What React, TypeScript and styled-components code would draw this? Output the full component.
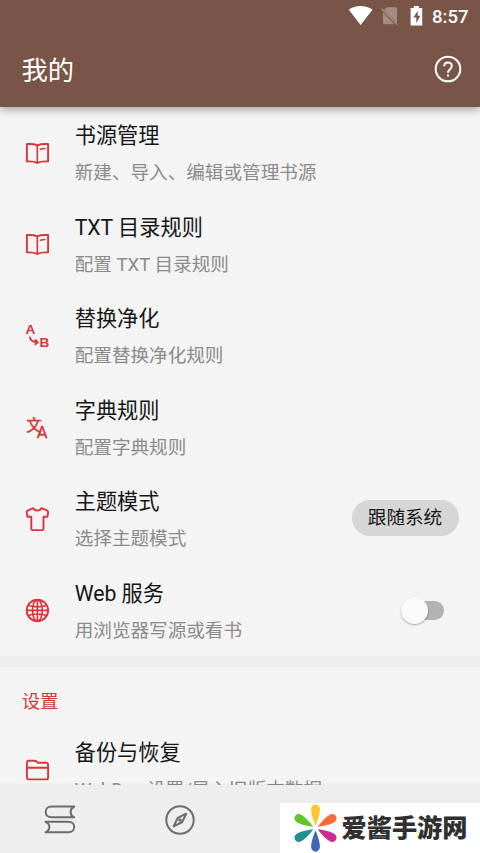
import React from 'react';
import styled, { createGlobalStyle } from 'styled-components';

const RED = '#d9363b';
const FONT = 'Roboto, "Noto Sans CJK SC", sans-serif';

const GlobalStyle = createGlobalStyle`
  body { margin: 0; background: #f4f4f4; }
  * { box-sizing: border-box; }
`;

const Screen = styled.div`
  position: relative;
  width: 480px;
  height: 853px;
  display: flex;
  flex-direction: column;
  overflow: hidden;
  background: #f4f4f4;
  font-family: ${FONT};
  color: #161616;
`;

const Header = styled.header`
  flex: none;
  height: 107px;
  z-index: 1;
  background: #795548;
  color: #fff;
  box-shadow: 0 3px 8px rgba(0, 0, 0, 0.32);
`;

const StatusBar = styled.div`
  height: 32px;
  display: flex;
  align-items: center;
  justify-content: flex-end;
  padding-right: 11px;
`;

const StatusIcons = styled.svg`
  width: 80px;
  height: 32px;
  margin-right: 7px;
`;

const Clock = styled.span`
  width: 37px;
  padding-top: 1px;
  font-size: 18.6px;
  font-weight: 500;
  line-height: 32px;
  white-space: nowrap;
`;

const TitleBar = styled.div`
  height: 75px;
  display: flex;
  align-items: center;
  justify-content: space-between;
  padding: 0 18px 0 21.5px;
`;

const PageTitle = styled.h1`
  margin: 2px 0 0;
  font-size: 26.3px;
  font-weight: 400;
  line-height: 40px;
`;

const HelpIcon = styled.svg`
  width: 28px;
  height: 28px;
  margin-bottom: 1px;
`;

const Content = styled.main`
  flex: 1;
  min-height: 0;
  overflow: hidden;
`;

const Row = styled.section`
  height: 91.5px;
  display: flex;
  align-items: center;
  padding: 0 21.5px 0 25px;
`;

const RowIcon = styled.svg`
  flex: none;
  width: 24px;
  height: 24px;
  margin-right: 25.7px;
  fill: none;
  stroke: ${RED};
  stroke-width: 1.9;
  stroke-linejoin: round;
  stroke-linecap: round;
`;

const Label = styled.div`
  flex: 1;
  padding-top: 2px;
  white-space: nowrap;
`;

const RowTitle = styled.div`
  font-size: 21.2px;
  line-height: 32px;
  margin-bottom: 7px;
`;

const Summary = styled.div`
  font-size: 18.6px;
  line-height: 28px;
  color: #8b8b8b;
`;

const ModeButton = styled.button`
  width: 107px;
  height: 36px;
  margin-bottom: 1px;
  padding: 1px 0 0;
  border: 0;
  border-radius: 18px;
  background: #d6d6d6;
  color: #161616;
  font: 400 18.6px/35px ${FONT};
`;

const Switch = styled.div`
  width: 38px;
  height: 19px;
  margin-right: 15px;
  border-radius: 10px;
  background: #b2b2b2;
`;

const Thumb = styled.div`
  width: 27px;
  height: 27px;
  margin: -4px 0 0 -5px;
  border-radius: 50%;
  background: #fafafa;
  box-shadow: 0 1px 2px rgba(0, 0, 0, 0.32);
`;

const Divider = styled.div`
  height: 10.5px;
  background: #eeeeee;
`;

const SectionTitle = styled.h2`
  margin: 0;
  height: 57.5px;
  padding: 21px 21.7px 0;
  font-size: 18.4px;
  font-weight: 400;
  line-height: 28px;
  color: ${RED};
`;

const BottomNav = styled.nav`
  flex: none;
  height: 68px;
  z-index: 1;
  display: grid;
  grid-template-columns: repeat(4, 120px);
  align-items: center;
  justify-items: center;
  background: #eeeeee;
  box-shadow: 0 -1px 2px rgba(0, 0, 0, 0.05);
`;

const NavIcon = styled.svg`
  width: 32px;
  height: 32px;
  margin-top: 1px;
  fill: none;
  stroke: #6b6b6b;
  stroke-width: 2;
  stroke-linejoin: round;
`;

const Watermark = styled.div`
  position: absolute;
  right: 0;
  bottom: 0;
  z-index: 2;
  width: 200px;
  height: 50px;
  display: flex;
  align-items: center;
  padding-left: 14px;
  background: #fff;
`;

const Flower = styled.svg`
  width: 43px;
  height: 48px;
  margin-right: 4.5px;
  margin-bottom: 1px;
`;

const Brand = styled.span`
  margin-bottom: 3px;
  font: 900 25.2px/47px "Noto Sans CJK SC", sans-serif;
  color: #303030;
  white-space: nowrap;
`;

const BookGlyph = () => (
  <>
    <path d="M12.3 4.3C9 2.6 5 2.9 1.9 3v17.4c3.3-.2 7-.3 10.4 1.5 3.2-1.8 7.2-1.7 10.8-1.5V3c-3.3-.1-7.5-.4-10.8 1.3Z" />
    <path d="M12.3 4.5v17.2M15.5 8.3c1.4-.5 2.8-.7 4.4-.8" strokeWidth="1.6" />
  </>
);

const ReplaceGlyph = () => (
  <>
    <g fill={RED} stroke="none" fontFamily="Liberation Sans, sans-serif" fontWeight="700" fontSize="13.6">
      <text x="0.5" y="9.9">A</text>
      <text x="14.6" y="23">B</text>
    </g>
    <path d="M5 13.4c.5 3.4 3 4.8 7.5 4.8m-2.2-2.2 2.5 2.2-2.5 2.1" strokeWidth="1.8" />
  </>
);

const DictionaryGlyph = () => (
  <g fill={RED} stroke={RED} strokeWidth="0.4">
    <text x="1.3" y="15.6" fontFamily="Noto Sans CJK SC, sans-serif" fontSize="15.5">文</text>
    <text x="11.8" y="22.8" fontFamily="Roboto, sans-serif" fontSize="16.5">A</text>
  </g>
);

const ShirtGlyph = () => (
  <path d="M8.3 1.2c1.2 3.1 6.9 3.1 8.1 0l5.4 2.1c1 .4 1.5 1.3 1.3 2.2l-.7 4.3h-3.9v12c0 .8-.5 1.3-1.3 1.3H7.6c-.8 0-1.3-.5-1.3-1.3v-12H2.5l-.8-4.3c-.2-1 .3-1.8 1.3-2.2Z" />
);

const GlobeGlyph = () => (
  <>
    <circle cx="12.4" cy="12.4" r="10.7" strokeWidth="1.9" />
    <ellipse cx="12.4" cy="12.4" rx="4.9" ry="10.7" strokeWidth="1.6" />
    <path d="M12.4 1.7v21.4M1.7 12.4h21.4M3.4 7.4c5 1.6 13 1.6 18 0M3.4 17.4c5-1.6 13-1.6 18 0" strokeWidth="1.6" />
  </>
);

const FolderGlyph = () => (
  <path d="M1.9 9.7V4.6c0-1.2.7-1.9 1.9-1.9h5.6c1 0 1.6.3 2.3 1l1.1 1.1h8.4c1.2 0 1.9.7 1.9 1.9v12.8c0 1.2-.7 1.9-1.9 1.9H3.8c-1.2 0-1.9-.7-1.9-1.9V9.7h21.2" />
);

type Item = { title: string; summary: string; glyph: React.ReactNode; control?: React.ReactNode };

const items: Item[] = [
  { title: '书源管理', summary: '新建、导入、编辑或管理书源', glyph: <BookGlyph /> },
  { title: 'TXT 目录规则', summary: '配置 TXT 目录规则', glyph: <BookGlyph /> },
  { title: '替换净化', summary: '配置替换净化规则', glyph: <ReplaceGlyph /> },
  { title: '字典规则', summary: '配置字典规则', glyph: <DictionaryGlyph /> },
  { title: '主题模式', summary: '选择主题模式', glyph: <ShirtGlyph />, control: <ModeButton>跟随系统</ModeButton> },
  { title: 'Web 服务', summary: '用浏览器写源或看书', glyph: <GlobeGlyph />, control: <Switch><Thumb /></Switch> },
];

const SettingRow = ({ title, summary, glyph, control }: Item) => (
  <Row>
    <RowIcon viewBox="0 0 24 24" overflow="visible">{glyph}</RowIcon>
    <Label>
      <RowTitle>{title}</RowTitle>
      <Summary>{summary}</Summary>
    </Label>
    {control}
  </Row>
);

const PETALS = [
  { angle: 0, color: '#fcc62f' },
  { angle: 60, color: '#fb6a35' },
  { angle: 120, color: '#ca2b94' },
  { angle: 180, color: '#4267b2' },
  { angle: 240, color: '#258f8e' },
  { angle: 300, color: '#62c52f' },
];

export default function App() {
  return (
    <Screen>
      <GlobalStyle />
      <Header>
        <StatusBar>
          <StatusIcons viewBox="345 0 80 32">
            <path d="M348.8 9.7C355 4.8 366 4.8 372.5 9.7L360.6 25Z" fill="#fff" />
            <path d="m386.5 7.3h9c1 0 1.6.6 1.6 1.6v14.5L384.3 10Zm-3.7 5 11.5 12h-9.7c-1 0-1.6-.6-1.6-1.6Z" fill="#a58b82" />
            <path d="m381.4 8.5 16 16.3" stroke="#a58b82" strokeWidth="1.6" />
            <path d="M413.8 6h5.2v2h3.2v17.6h-11.6V8h3.2Z" fill="#fff" />
            <path d="m417.7 10.8-4.2 6.7h2.8v5.4l4.1-7.1h-2.7Z" fill="#795548" />
          </StatusIcons>
          <Clock>8:57</Clock>
        </StatusBar>
        <TitleBar>
          <PageTitle>我的</PageTitle>
          <HelpIcon viewBox="0 0 28 28" fill="none" stroke="#fff" strokeWidth="2">
            <circle cx="14" cy="14" r="12.3" />
            <path d="M10.2 11.2c0-5.1 7.6-5 7.6-.2 0 3.2-3.8 3.3-3.8 6.8" />
            <path d="M14 19.4v2.2" />
          </HelpIcon>
        </TitleBar>
      </Header>
      <Content>
        {items.map((item) => <SettingRow key={item.title} {...item} />)}
        <Divider />
        <SectionTitle>设置</SectionTitle>
        <SettingRow title="备份与恢复" summary="WebDav 设置/导入旧版本数据" glyph={<FolderGlyph />} />
      </Content>
      <BottomNav>
        <NavIcon viewBox="0 0 32 32">
          <path d="M30.2 2.5H7.5C4 2.5 1.7 4.8 1.7 7.9s2.3 5.4 5.8 5.4h22.7c-4.8-2.5-4.8-8.3 0-10.8ZM1.5 17.8h22.9c3.5 0 5.8 2.2 5.8 5.2s-2.3 5.3-5.8 5.3H1.5c5.2-2.4 5.2-8.1 0-10.5Z" />
        </NavIcon>
        <NavIcon viewBox="0 0 32 32">
          <circle cx="16" cy="16" r="13.7" />
          <path d="m22.2 9.7-4 8.3-8.5 4.3 4-8.4Z" />
          <circle cx="16" cy="16" r="0.8" />
        </NavIcon>
      </BottomNav>
      <Watermark>
        <Flower viewBox="-21.5 -24 43 48">
          {PETALS.map(({ angle, color }) => (
            <path key={angle} d="M0-2.5C-2-7-4.4-14-4.4-18.6-4.4-25.3 4.4-25.3 4.4-18.6 4.4-14 2-7 0-2.5Z" fill={color} transform={`rotate(${angle})`} />
          ))}
        </Flower>
        <Brand>爱酱手游网</Brand>
      </Watermark>
    </Screen>
  );
}
